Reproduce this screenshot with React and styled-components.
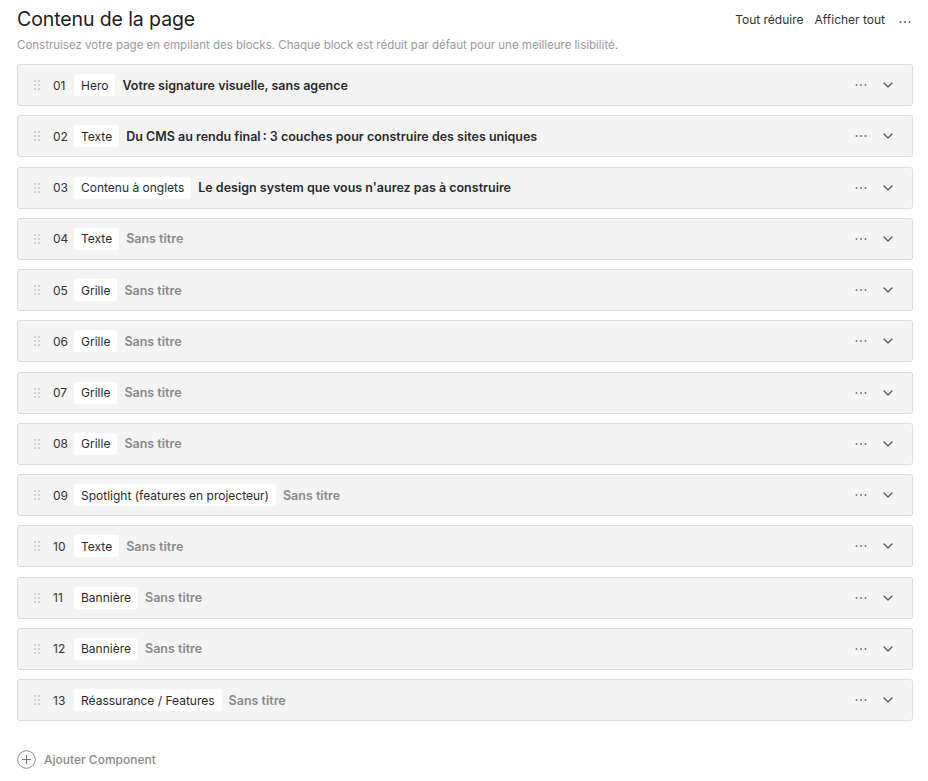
import React from "react";
import styled, { createGlobalStyle } from "styled-components";

const Global = createGlobalStyle`
  html, body { margin: 0; padding: 0; background: #fff; }
  body { font-family: Inter, "Noto Sans", "Liberation Sans", sans-serif; color: #1f1f1f; -webkit-font-smoothing: antialiased; }
`;

const Page = styled.div`
  padding: 6px 15px 0 17px;
`;

const Header = styled.div`
  display: flex;
  align-items: center;
  justify-content: space-between;
  height: 26px;
`;

const Title = styled.h1`
  margin: 0;
  font-size: 19.5px;
  font-weight: 400;
  letter-spacing: -0.1px;
  color: #1d1d1d;
`;

const Actions = styled.div`
  display: flex;
  align-items: center;
  gap: 11px;
  padding-right: 2px;
`;

const TextButton = styled.button`
  border: 0;
  background: none;
  padding: 0;
  font: inherit;
  font-size: 12px;
  color: #333;
  cursor: pointer;
`;

const Subtitle = styled.p`
  margin: 6px 0 12px;
  font-size: 11.5px;
  color: #9a9a9a;
  line-height: 14px;
`;

const List = styled.div`
  display: flex;
  flex-direction: column;
  gap: 9.25px;
`;

const Row = styled.div`
  display: flex;
  align-items: center;
  height: 40px;
  border: 1px solid #dcdcdc;
  border-radius: 3px;
  background: #f4f4f4;
  padding: 0 19px 0 15px;
`;

const Handle = styled.span`
  display: grid;
  grid-template-columns: 2px 2px;
  gap: 2px 2px;
  margin-left: 1px;
  width: 6px;
  span { width: 2px; height: 2px; border-radius: 1px; background: #c4c4c4; }
`;

const Num = styled.span`
  font-size: 12px;
  color: #333;
  margin-left: 13px;
  width: 14px;
`;

const Badge = styled.span`
  display: inline-flex;
  align-items: center;
  height: 22px;
  padding: 0 7px;
  margin-left: 7px;
  background: #fff;
  border-radius: 3px;
  font-size: 12px;
  color: #2a2a2a;
  white-space: nowrap;
`;

const BlockTitle = styled.span`
  margin-left: 7px;
  font-size: 12.5px;
  font-weight: 600;
  color: ${(p) => (p.$empty ? "#8a8a8a" : "#2a2a2a")};
  flex: 1;
  white-space: nowrap;
`;

const RowIcons = styled.div`
  display: flex;
  align-items: center;
  gap: 16px;
  color: #555;
`;

const Dots = ({ color = "#777" }) => (
  <svg width="12" height="4" viewBox="0 0 12 4">
    <circle cx="1.5" cy="2" r="1" fill={color} />
    <circle cx="6" cy="2" r="1" fill={color} />
    <circle cx="10.5" cy="2" r="1" fill={color} />
  </svg>
);

const Chevron = () => (
  <svg width="10" height="6" viewBox="0 0 10 6" fill="none">
    <path d="M1 1l4 4 4-4" stroke="#555" strokeWidth="1.2" strokeLinecap="round" strokeLinejoin="round" />
  </svg>
);

const AddButton = styled.button`
  display: flex;
  align-items: center;
  gap: 8px;
  margin-top: 29px;
  border: 0;
  background: none;
  padding: 0;
  font: inherit;
  font-size: 12px;
  font-weight: 500;
  color: #8a8a8a;
  cursor: pointer;
`;

const blocks = [
  ["Hero", "Votre signature visuelle, sans agence"],
  ["Texte", "Du CMS au rendu final\u202f: 3 couches pour construire des sites uniques"],
  ["Contenu à onglets", "Le design system que vous n'aurez pas à construire"],
  ["Texte", null],
  ["Grille", null],
  ["Grille", null],
  ["Grille", null],
  ["Grille", null],
  ["Spotlight (features en projecteur)", null],
  ["Texte", null],
  ["Bannière", null],
  ["Bannière", null],
  ["Réassurance / Features", null],
];

export default function App() {
  return (
    <>
      <Global />
      <Page>
        <Header>
          <Title>Contenu de la page</Title>
          <Actions>
            <TextButton>Tout réduire</TextButton>
            <TextButton>Afficher tout</TextButton>
            <TextButton style={{ marginLeft: 3 }}><Dots color="#666" /></TextButton>
          </Actions>
        </Header>
        <Subtitle>Construisez votre page en empilant des blocks. Chaque block est réduit par défaut pour une meilleure lisibilité.</Subtitle>
        <List>
          {blocks.map(([type, title], i) => (
            <Row key={i}>
              <Handle>
                {Array.from({ length: 6 }).map((_, j) => <span key={j} />)}
              </Handle>
              <Num>{String(i + 1).padStart(2, "0")}</Num>
              <Badge>{type}</Badge>
              <BlockTitle $empty={!title}>{title || "Sans titre"}</BlockTitle>
              <RowIcons>
                <Dots />
                <Chevron />
              </RowIcons>
            </Row>
          ))}
        </List>
        <AddButton>
          <svg width="19" height="19" viewBox="0 0 19 19" fill="none">
            <circle cx="9.5" cy="9.5" r="8.8" stroke="#8a8a8a" strokeWidth="1" />
            <path d="M9.5 5v9M5 9.5h9" stroke="#777" strokeWidth="1.1" />
          </svg>
          Ajouter Component
        </AddButton>
      </Page>
    </>
  );
}
